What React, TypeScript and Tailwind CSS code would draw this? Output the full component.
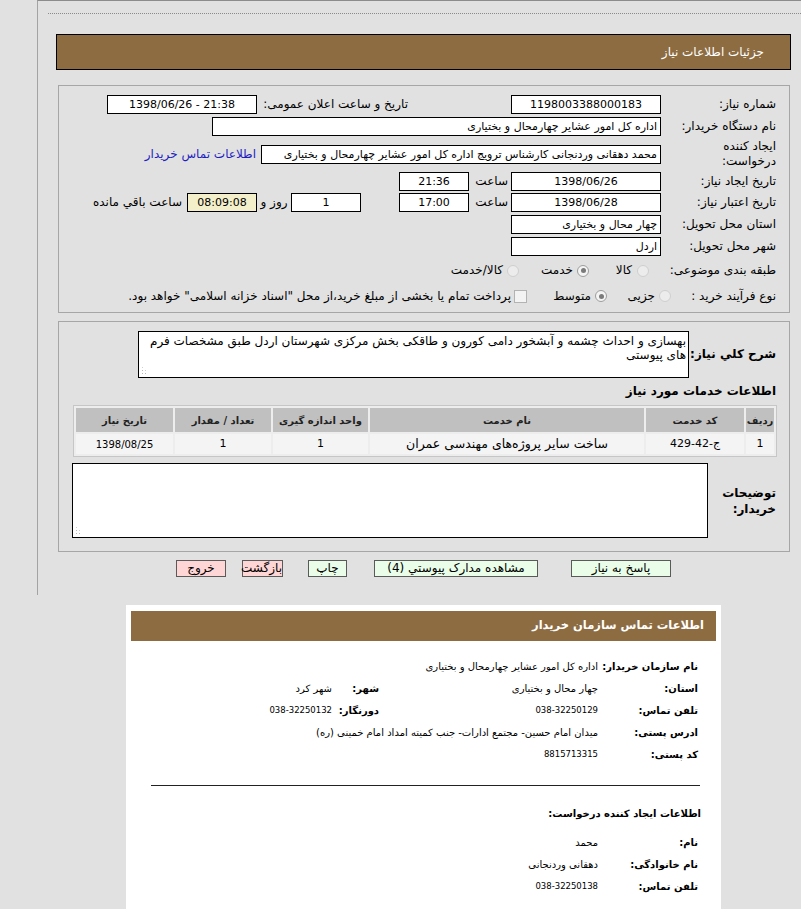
import React from "react";

const FONT = "font-['DejaVu_Sans',sans-serif]";

function Field({
  className = "",
  dir,
  children,
}: {
  className?: string;
  dir?: "ltr" | "rtl";
  children?: React.ReactNode;
}) {
  return (
    <div
      dir={dir}
      className={
        "h-[19px] shrink-0 overflow-hidden whitespace-nowrap border border-black bg-white px-[3px] text-[11px] leading-[17px] text-black " +
        className
      }
    >
      {children}
    </div>
  );
}

function Radio({ checked = false }: { checked?: boolean }) {
  return (
    <span
      className={
        "flex h-[12px] w-[12px] shrink-0 items-center justify-center rounded-full border " +
        (checked ? "border-[#9d9d9d] bg-[#f4f4f4]" : "border-[#cfcfcf] bg-[#ececec]")
      }
    >
      {checked && <span className="h-[5px] w-[5px] rounded-full bg-[#7b7b7b]" />}
    </span>
  );
}

function Grip() {
  return (
    <svg className="absolute bottom-[2px] left-[2px]" width="8" height="8" viewBox="0 0 8 8">
      <rect x="1" y="6" width="1" height="1" fill="#b8b8b8" />
      <rect x="1" y="3" width="1" height="1" fill="#b8b8b8" />
      <rect x="4" y="6" width="1" height="1" fill="#b8b8b8" />
      <rect x="1" y="0" width="1" height="1" fill="#cfcfcf" />
      <rect x="4" y="3" width="1" height="1" fill="#cfcfcf" />
    </svg>
  );
}

function Label({ className = "", children }: { className?: string; children: React.ReactNode }) {
  return <div className={"shrink-0 whitespace-nowrap text-[12px] leading-[15px] " + className}>{children}</div>;
}

function NeedInfo() {
  return (
    <div className="ml-[20px] mr-[11px] mt-[15px] border border-[#a6a6a6] pb-[4px] pr-[13px] pt-[7px]">
      <div className="flex h-[22px] items-center">
        <Label className="w-[115px]">شماره نیاز:</Label>
        <Field dir="ltr" className="w-[150px] text-center">1198003388000183</Field>
        <div className="w-[103px] shrink-0" />
        <Label className="w-[151px]">تاریخ و ساعت اعلان عمومی:</Label>
        <Field dir="ltr" className="w-[150px] text-center">1398/06/26 - 21:38</Field>
      </div>

      <div className="flex h-[22px] items-center">
        <Label className="w-[115px]">نام دستگاه خریدار:</Label>
        <Field className="w-[449px]">اداره کل امور عشایر چهارمحال و بختیاری</Field>
      </div>

      <div className="flex h-[34px] items-center">
        <Label className="w-[115px] leading-[14px]">
          ایجاد کننده
          <br />
          درخواست:
        </Label>
        <Field className="w-[400px]">
          محمد دهقانی وردنجانی کارشناس ترویج اداره کل امور عشایر چهارمحال و بختیاری
        </Field>
        <Label className="ms-[5px] text-[#1d1dc2]">اطلاعات تماس خریدار</Label>
      </div>

      <div className="flex h-[21px] items-center">
        <Label className="w-[115px]">تاریخ ایجاد نیاز:</Label>
        <Field dir="ltr" className="w-[150px] text-center">1398/06/26</Field>
        <Label className="w-[42px] pr-[3px]">ساعت</Label>
        <Field dir="ltr" className="w-[70px] text-center">21:36</Field>
      </div>

      <div className="flex h-[21px] items-center">
        <Label className="w-[115px]">تاریخ اعتبار نیاز:</Label>
        <Field dir="ltr" className="w-[150px] text-center">1398/06/28</Field>
        <Label className="w-[42px] pr-[3px]">ساعت</Label>
        <Field dir="ltr" className="w-[70px] text-center">17:00</Field>
        <div className="w-[38px] shrink-0" />
        <Field dir="ltr" className="w-[70px] text-center">1</Field>
        <Label className="w-[34px] text-center">روز و</Label>
        <Field dir="ltr" className="w-[70px] !bg-[#f3efcb] text-center">08:09:08</Field>
        <Label className="ms-[5px]">ساعت باقي مانده</Label>
      </div>

      <div className="flex h-[22px] items-center">
        <Label className="w-[115px]">استان محل تحویل:</Label>
        <Field className="w-[150px]">چهار محال و بختیاری</Field>
      </div>

      <div className="flex h-[22px] items-center">
        <Label className="w-[115px]">شهر محل تحویل:</Label>
        <Field className="w-[150px]">اردل</Field>
      </div>

      <div className="flex h-[27px] items-center">
        <Label className="w-[115px]">طبقه بندی موضوعی:</Label>
        <div className="flex w-[72px] shrink-0 items-center">
          <span className="ms-[12px]">
            <Radio />
          </span>
          <Label className="ms-[5px]">کالا</Label>
        </div>
        <div className="flex w-[70px] shrink-0 items-center">
          <Radio checked />
          <Label className="ms-[4px]">خدمت</Label>
        </div>
        <div className="flex items-center">
          <Radio />
          <Label className="ms-[4px]">کالا/خدمت</Label>
        </div>
      </div>

      <div className="flex h-[24px] items-center">
        <Label className="w-[105px]">نوع فرآیند خرید :</Label>
        <div className="flex w-[64px] shrink-0 items-center">
          <Radio />
          <Label className="ms-[4px]">جزیی</Label>
        </div>
        <div className="flex w-[80px] shrink-0 items-center">
          <Radio checked />
          <Label className="ms-[4px]">متوسط</Label>
        </div>
        <span className="h-[13px] w-[13px] shrink-0 border border-[#b3b3b3] bg-[#f3f3f3]" />
        <Label className="ms-[3px]">
          پرداخت تمام یا بخشی از مبلغ خرید،از محل "اسناد خزانه اسلامی" خواهد بود.
        </Label>
      </div>
    </div>
  );
}

const cols = [
  { title: "ردیف", value: "1", w: "w-[28px]", size: "text-[11px]" },
  { title: "کد خدمت", value: "ج-42-429", w: "w-[98px]", size: "text-[11px]" },
  { title: "نام خدمت", value: "ساخت سایر پروژه‌های مهندسی عمران", w: "w-[274px]", size: "text-[12.5px]" },
  { title: "واحد اندازه گیری", value: "1", w: "w-[95px]", size: "text-[11px]" },
  { title: "تعداد / مقدار", value: "1", w: "w-[96px]", size: "text-[11px]" },
  { title: "تاریخ نیاز", value: "1398/08/25", w: "w-[97px]", size: "text-[10px]" },
];

function ServiceInfo() {
  return (
    <div className="ml-[20px] mr-[11px] mt-[8px] border border-[#a6a6a6] pb-[13px] pt-[9px]">
      <div className="flex items-center pr-[13px]">
        <Label className="w-[87px] font-bold">شرح کلي نیاز:</Label>
        <div className="relative h-[47px] w-[551px] shrink-0 border border-black bg-white px-[2px] pt-[2px] text-[12px] leading-[14px]">
          بهسازی و احداث چشمه و آبشخور دامی کورون و طاقکی بخش مرکزی شهرستان اردل طبق مشخصات فرم های پیوستی
          <Grip />
        </div>
      </div>

      <div className="flex h-[27px] items-center pr-[13px]">
        <Label className="font-bold">اطلاعات خدمات مورد نیاز</Label>
      </div>

      <div className="pr-[12px]">
        <div className="flex w-[704px] flex-col gap-[2px] border border-[#c6c6c6] bg-[#ededed] p-[2px]">
          <div className="flex h-[24px] gap-[2px]">
            {cols.map((c) => (
              <div
                key={c.title}
                className={
                  "flex shrink-0 items-center justify-center bg-[#c0c0c0] text-[10px] font-bold text-[#222] " + c.w
                }
              >
                {c.title}
              </div>
            ))}
          </div>
          <div className="flex h-[20px] gap-[2px]">
            {cols.map((c) => (
              <div
                key={c.title}
                className={"flex shrink-0 items-center justify-center bg-[#f4f4f4] " + c.size + " " + c.w}
              >
                {c.value}
              </div>
            ))}
          </div>
        </div>
      </div>

      <div className="mt-[6px] flex items-center pr-[13px]">
        <Label className="w-[68px] font-bold leading-[16px]">
          توضیحات
          <br />
          خریدار:
        </Label>
        <div className="relative h-[75px] w-[636px] shrink-0 border border-black bg-white">
          <Grip />
        </div>
      </div>
    </div>
  );
}

function Buttons() {
  const green = "border-[#5a5a5a] bg-[#e9fde9]";
  const pink = "border-[#5a5a5a] bg-[#ffd6d6]";
  return (
    <div className="mt-[8px] flex h-[17px] pr-[130px] text-[12px] leading-[15px]">
      <div className={"w-[100px] shrink-0 border text-center " + green}>پاسخ به نیاز</div>
      <div className={"ms-[33px] w-[164px] shrink-0 border text-center " + green}>مشاهده مدارک پیوستي (4)</div>
      <div className={"ms-[27px] w-[39px] shrink-0 border text-center " + green}>چاپ</div>
      <div className={"ms-[25px] w-[41px] shrink-0 border text-center " + pink}>بازگشت</div>
      <div className={"ms-[16px] w-[50px] shrink-0 border text-center " + pink}>خروج</div>
    </div>
  );
}

const isDigits = (s?: string) => !!s && /^[0-9-]+$/.test(s);

function Row({
  label,
  value,
  label2,
  value2,
}: {
  label: string;
  value: string;
  label2?: string;
  value2?: string;
}) {
  return (
    <>
      <div className="flex h-[22px] items-center whitespace-nowrap text-[10px] font-bold">{label}</div>
      <div
        className={
          "flex h-[22px] items-center whitespace-nowrap " + (isDigits(value) ? "text-[8.5px]" : "text-[10px]")
        }
      >
        {value}
      </div>
      <div className="flex h-[22px] items-center whitespace-nowrap text-[10px] font-bold">{label2}</div>
      <div
        className={
          "flex h-[22px] items-center whitespace-nowrap " + (isDigits(value2) ? "text-[8.5px]" : "text-[10px]")
        }
      >
        {value2}
      </div>
    </>
  );
}

function ContactCard() {
  return (
    <div className="mr-[80px] ml-auto mt-[10px] w-[595px] bg-white px-[5px] pb-[20px] pt-[6px]">
      <div className="flex h-[30px] items-center bg-[#8d6c41] pr-[12px] text-[11.5px] font-bold text-white">
        اطلاعات تماس سازمان خریدار
      </div>
      <div className="grid grid-cols-[100px_219px_47px_1fr] pr-[18px] pt-[14px]">
        <Row label="نام سازمان خریدار:" value="اداره کل امور عشایر چهارمحال و بختیاری" />
        <Row label="استان:" value="چهار محال و بختیاری" label2="شهر:" value2="شهر کرد" />
        <Row label="تلفن تماس:" value="038-32250129" label2="دورنگار:" value2="038-32250132" />
        <Row label="ادرس پستی:" value="میدان امام حسین- مجتمع ادارات- جنب کمیته امداد امام خمینی (ره)" />
        <Row label="کد پستی:" value="8815713315" />
      </div>
      <div className="ml-[20px] mr-[16px] mt-[20px] border-t border-[#222]" />
      <div className="mt-[16px] flex h-[22px] items-center pr-[15px] text-[10px] font-bold">
        اطلاعات ایجاد کننده درخواست:
      </div>
      <div className="grid grid-cols-[100px_219px_47px_1fr] pr-[18px] pt-[7px]">
        <Row label="نام:" value="محمد" />
        <Row label="نام خانوادگی:" value="دهقانی وردنجانی" />
        <Row label="تلفن تماس:" value="038-32250138" />
      </div>
    </div>
  );
}

export default function App() {
  return (
    <div dir="rtl" className={"min-h-[909px] overflow-hidden bg-[#e1e1e1] text-black " + FONT}>
      <div className="ml-[37px] border-l border-t border-l-[#a3a3a3] border-t-[#8c8c8c] pb-[18px]">
        <div className="ml-[10px] mt-[12px] border-t border-dotted border-[#8a8a8a]" />
        <div className="ml-[18px] mr-[10px] mt-[20px] flex h-[36px] items-center border border-black bg-[#8d6c41] pr-[26px] text-[12px] text-white">
          جزئیات اطلاعات نیاز
        </div>
        <NeedInfo />
        <ServiceInfo />
        <Buttons />
      </div>
      <ContactCard />
    </div>
  );
}
